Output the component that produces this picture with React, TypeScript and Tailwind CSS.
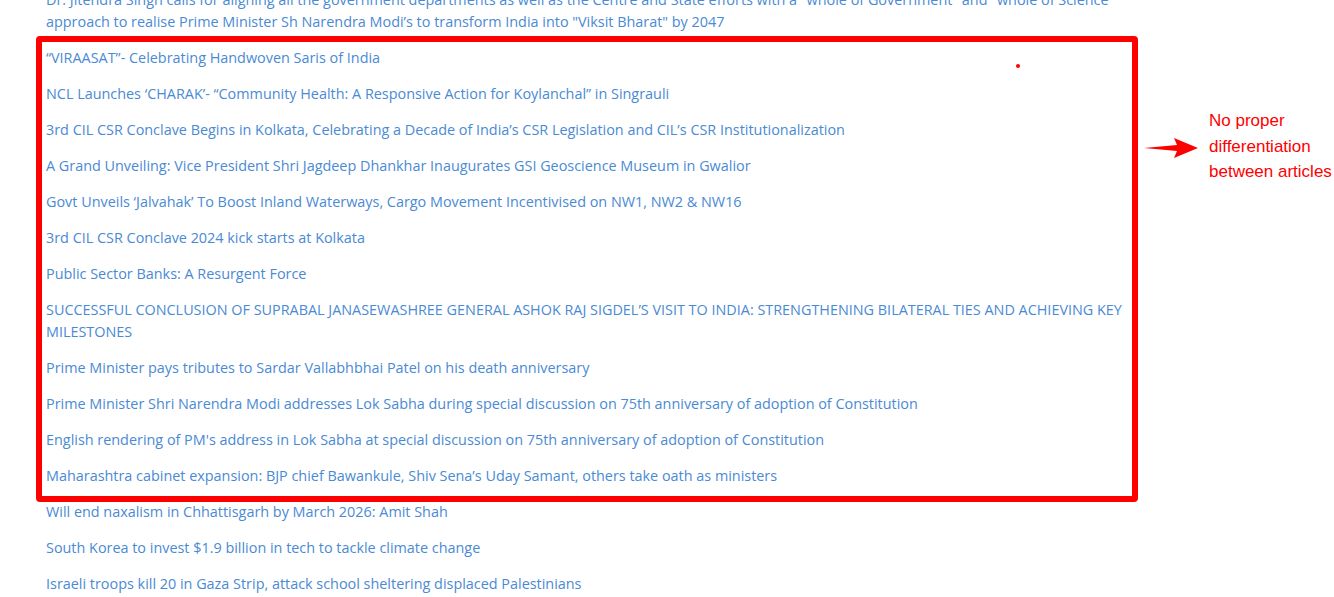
const articles = [
  `Dr. Jitendra Singh calls for aligning all the government departments as well as the Centre and State efforts with a "whole of Government" and "whole of Science approach to realise Prime Minister Sh Narendra Modi’s to transform India into "Viksit Bharat" by 2047`,
  "“VIRAASAT”- Celebrating Handwoven Saris of India",
  "NCL Launches ‘CHARAK’- “Community Health: A Responsive Action for Koylanchal” in Singrauli",
  "3rd CIL CSR Conclave Begins in Kolkata, Celebrating a Decade of India’s CSR Legislation and CIL’s CSR Institutionalization",
  "A Grand Unveiling: Vice President Shri Jagdeep Dhankhar Inaugurates GSI Geoscience Museum in Gwalior",
  "Govt Unveils ‘Jalvahak’ To Boost Inland Waterways, Cargo Movement Incentivised on NW1, NW2 & NW16",
  "3rd CIL CSR Conclave 2024 kick starts at Kolkata",
  "Public Sector Banks: A Resurgent Force",
  "SUCCESSFUL CONCLUSION OF SUPRABAL JANASEWASHREE GENERAL ASHOK RAJ SIGDEL’S VISIT TO INDIA: STRENGTHENING BILATERAL TIES AND ACHIEVING KEY MILESTONES",
  "Prime Minister pays tributes to Sardar Vallabhbhai Patel on his death anniversary",
  "Prime Minister Shri Narendra Modi addresses Lok Sabha during special discussion on 75th anniversary of adoption of Constitution",
  "English rendering of PM's address in Lok Sabha at special discussion on 75th anniversary of adoption of Constitution",
  "Maharashtra cabinet expansion: BJP chief Bawankule, Shiv Sena’s Uday Samant, others take oath as ministers",
  "Will end naxalism in Chhattisgarh by March 2026: Amit Shah",
  "South Korea to invest $1.9 billion in tech to tackle climate change",
  "Israeli troops kill 20 in Gaza Strip, attack school sheltering displaced Palestinians",
];

export default function App() {
  return (
    <div className="relative h-[597px] w-[1334px] overflow-hidden bg-white">
      {/* News list */}
      <ul className="-mt-[11px] ml-[46px] w-[1084px] font-['Open_Sans',sans-serif] text-[14.4px] leading-[22px] text-[#4a8ad4]">
        {articles.map((title, i) => (
          <li key={i} className="mb-[14px]">
            <a href="#" className="cursor-pointer">
              {title}
            </a>
          </li>
        ))}
      </ul>

      {/* Review annotation */}
      <div className="absolute left-[36px] top-[36px] h-[466px] w-[1102px] rounded-[4px] border-[6px] border-[#ff0000]" />
      <div className="absolute left-[1016px] top-[64px] h-[4px] w-[4px] rounded-full bg-[#ff0000]" />
      <svg
        className="absolute left-[1144px] top-[137px]"
        width="56"
        height="22"
        viewBox="0 0 56 22"
      >
        <polygon points="0,11 33,8 30,1 54,11 30,21 33,14" fill="#ff0000" />
      </svg>
      <p className="absolute left-[1209px] top-[108px] font-['Liberation_Sans',Arial,sans-serif] text-[17px] leading-[25.5px] text-[#ff0000]">
        No proper
        <br />
        differentiation
        <br />
        between articles
      </p>
    </div>
  );
}
